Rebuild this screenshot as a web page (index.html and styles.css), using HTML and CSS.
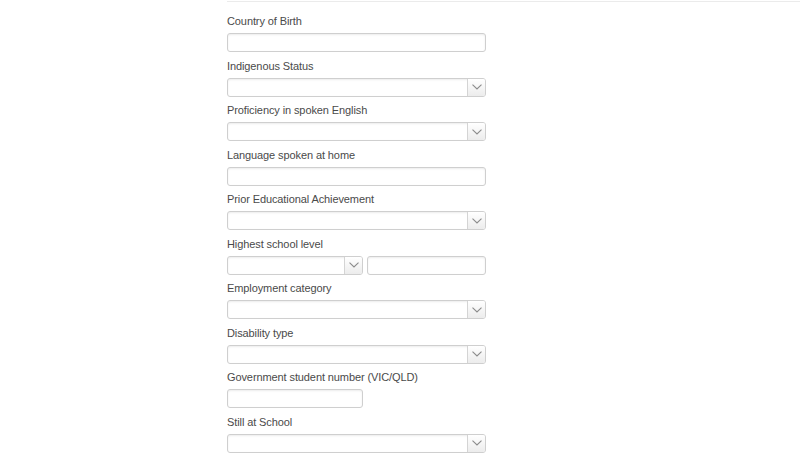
FILE: index.html
```html
<!DOCTYPE html>
<html>
<head>
<meta charset="utf-8">
<link rel="stylesheet" href="styles.css">
</head>
<body>
<div class="page">
  <div class="topline"></div>
  <form class="form">
    <div class="field">
      <label class="label">Country of Birth</label>
      <div class="input full"></div>
    </div>
    <div class="field">
      <label class="label">Indigenous Status</label>
      <div class="select full"><span class="value"></span><span class="arrow"><svg width="10" height="6" viewBox="0 0 10 6"><path d="M0.5 0.7 L5 5 L9.5 0.7" fill="none" stroke="#8c8c8c" stroke-width="1.1"/></svg></span></div>
    </div>
    <div class="field">
      <label class="label">Proficiency in spoken English</label>
      <div class="select full"><span class="value"></span><span class="arrow"><svg width="10" height="6" viewBox="0 0 10 6"><path d="M0.5 0.7 L5 5 L9.5 0.7" fill="none" stroke="#8c8c8c" stroke-width="1.1"/></svg></span></div>
    </div>
    <div class="field">
      <label class="label">Language spoken at home</label>
      <div class="input full"></div>
    </div>
    <div class="field">
      <label class="label">Prior Educational Achievement</label>
      <div class="select full"><span class="value"></span><span class="arrow"><svg width="10" height="6" viewBox="0 0 10 6"><path d="M0.5 0.7 L5 5 L9.5 0.7" fill="none" stroke="#8c8c8c" stroke-width="1.1"/></svg></span></div>
    </div>
    <div class="field">
      <label class="label">Highest school level</label>
      <div class="pair">
        <div class="select half"><span class="value"></span><span class="arrow"><svg width="10" height="6" viewBox="0 0 10 6"><path d="M0.5 0.7 L5 5 L9.5 0.7" fill="none" stroke="#8c8c8c" stroke-width="1.1"/></svg></span></div>
        <div class="input rest"></div>
      </div>
    </div>
    <div class="field">
      <label class="label">Employment category</label>
      <div class="select full"><span class="value"></span><span class="arrow"><svg width="10" height="6" viewBox="0 0 10 6"><path d="M0.5 0.7 L5 5 L9.5 0.7" fill="none" stroke="#8c8c8c" stroke-width="1.1"/></svg></span></div>
    </div>
    <div class="field">
      <label class="label">Disability type</label>
      <div class="select full"><span class="value"></span><span class="arrow"><svg width="10" height="6" viewBox="0 0 10 6"><path d="M0.5 0.7 L5 5 L9.5 0.7" fill="none" stroke="#8c8c8c" stroke-width="1.1"/></svg></span></div>
    </div>
    <div class="field">
      <label class="label">Government student number (VIC/QLD)</label>
      <div class="input half"></div>
    </div>
    <div class="field">
      <label class="label">Still at School</label>
      <div class="select full"><span class="value"></span><span class="arrow"><svg width="10" height="6" viewBox="0 0 10 6"><path d="M0.5 0.7 L5 5 L9.5 0.7" fill="none" stroke="#8c8c8c" stroke-width="1.1"/></svg></span></div>
    </div>
  </form>
</div>
</body>
</html>
```

FILE: styles.css
```css
html, body {
  margin: 0;
  padding: 0;
  background: #ffffff;
}
.page {
  width: 800px;
  height: 475px;
  overflow: hidden;
  font-family: "Liberation Sans", Arial, sans-serif;
}
.topline {
  margin-left: 227px;
  height: 1px;
  border-bottom: 1px solid #ebebeb;
}
.form {
  margin-left: 227px;
  width: 259px;
  padding-top: 13px;
  display: flex;
  flex-direction: column;
  gap: 7.5px;
}
.field {
  display: flex;
  flex-direction: column;
}
.label {
  display: block;
  font-size: 11px;
  line-height: 13px;
  letter-spacing: -0.1px;
  color: #4a4a4a;
  margin-bottom: 5px;
}
.input, .select {
  box-sizing: border-box;
  height: 19px;
  border: 1px solid #cfcfcf;
  border-radius: 3px;
  background: #fff;
  box-shadow: inset 0 1px 2px rgba(0,0,0,0.08);
}
.full { width: 259px; }
.half { width: 136px; }
.select {
  display: flex;
  overflow: hidden;
}
.select .value {
  flex: 1;
}
.select .arrow {
  width: 17px;
  border-left: 1px solid #d4d4d4;
  background: linear-gradient(#ffffff, #ececec);
  display: flex;
  align-items: center;
  justify-content: center;
}
.select .arrow svg {
  display: block;
}
.pair {
  display: flex;
  gap: 4px;
}
.rest {
  width: 119px;
}
```
